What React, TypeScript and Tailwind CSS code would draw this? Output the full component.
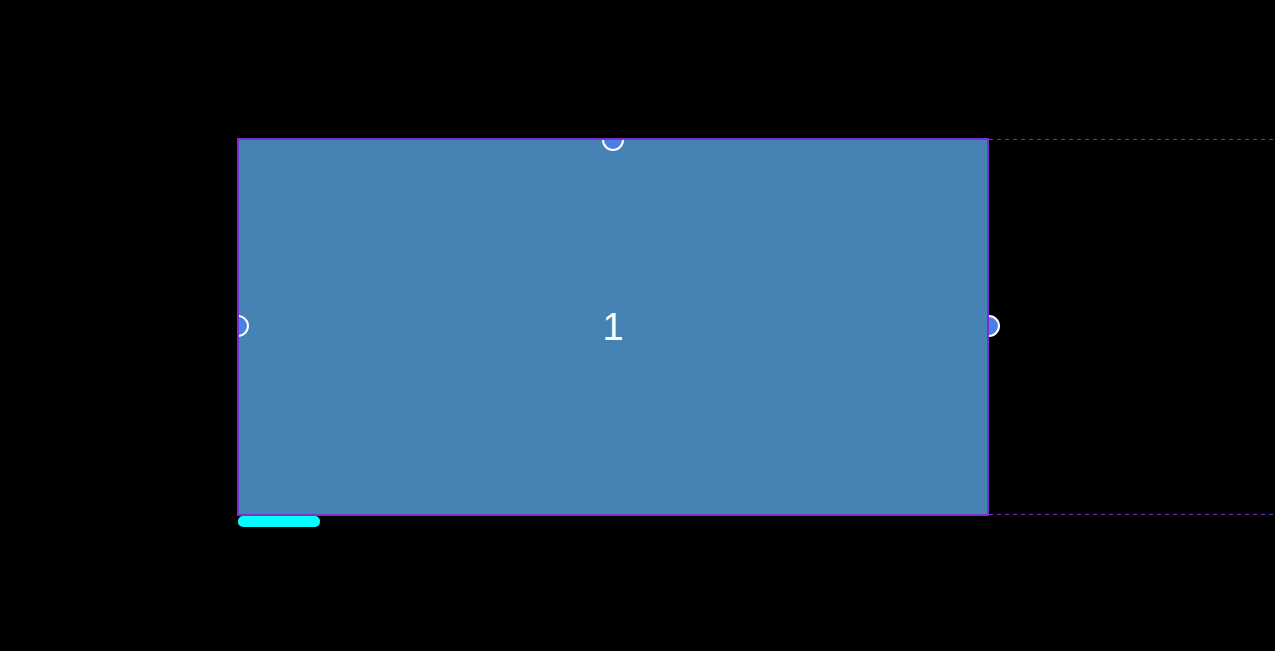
export default function App() {
  return (
    <div className="min-h-screen bg-black pt-[138px] pl-[237px] overflow-hidden">
      <div className="flex">
        {/* node */}
        <div className="relative w-[752px] h-[378px] shrink-0">
          {/* right handle sits behind the node */}
          <span className="absolute left-[741px] top-[177px] w-[22px] h-[22px] rounded-full border-2 border-white bg-[#4a7fe6]" />
          <div className="relative z-10 w-full h-full box-border border-2 border-[#7b2fcf] bg-[#4682b4] overflow-hidden flex items-center justify-center">
            <span className="absolute left-[363px] top-[-11px] w-[22px] h-[22px] rounded-full border-2 border-white bg-[#4a7fe6]" />
            <span className="absolute left-[-12px] top-[175px] w-[22px] h-[22px] rounded-full border-2 border-white bg-[#4a7fe6]" />
            <span className="text-white text-[38px] leading-none [font-family:'Liberation_Sans',Arial,sans-serif]">1</span>
          </div>
        </div>
        {/* guide lines */}
        <div className="flex-1 h-[378px] flex flex-col justify-between pt-[1px] pb-[1px]">
          <div className="h-px bg-[repeating-linear-gradient(to_right,#6e2fc4_0_4px,transparent_4px_8px)]" />
          <div className="h-px bg-[repeating-linear-gradient(to_right,#6e2fc4_0_4px,transparent_4px_8px)]" />
        </div>
      </div>
      <div className="ml-[1px] w-[82px] h-[11px] rounded-[5px] bg-[#00ffff]" />
    </div>
  );
}
